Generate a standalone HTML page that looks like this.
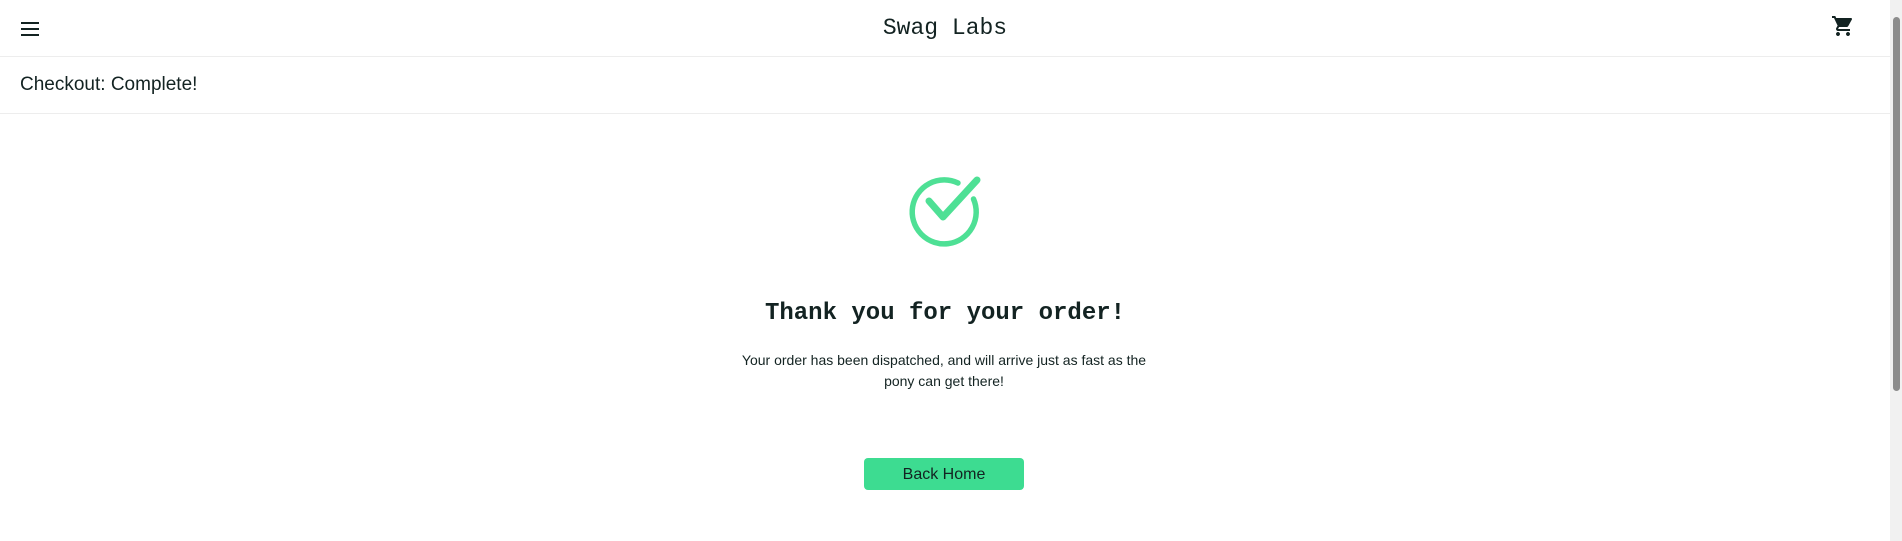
<!DOCTYPE html>
<html><head><meta charset="utf-8"><style>
html,body{margin:0;padding:0;}
body{width:1902px;height:541px;overflow:hidden;background:#fff;position:relative;font-family:"Liberation Sans",sans-serif;color:#132322;}
.hdr{position:absolute;left:0;top:0;width:1890px;height:56px;border-bottom:1px solid #ededed;}
.title{position:absolute;left:0;width:1890px;top:14px;text-align:center;font-family:"Liberation Mono",monospace;font-size:23px;line-height:28px;}
.sub{position:absolute;left:0;top:57px;width:1890px;height:56px;border-bottom:1px solid #ededed;}
.sub span{position:absolute;left:20px;top:16px;font-size:19px;line-height:24px;}
h2{position:absolute;left:0;width:1890px;top:299px;margin:0;text-align:center;font-family:"Liberation Mono",monospace;font-weight:bold;font-size:24px;line-height:30px;}
p{position:absolute;left:733px;width:422px;top:350px;margin:0;text-align:center;font-size:14px;line-height:21px;}
.btn{position:absolute;left:864px;top:458px;width:160px;height:32px;background:#3ddc91;border-radius:4px;text-align:center;font-size:16px;line-height:33px;}
.sb{position:absolute;left:1890px;top:0;width:12px;height:541px;background:#f1f1f1;}
.th{position:absolute;left:1893px;top:17px;width:7px;height:374px;background:#8c8c8c;border-radius:4px;}
</style></head><body>
<div class="hdr">
<svg style="position:absolute;left:20px;top:21px" width="20" height="16" viewBox="0 0 20 16"><rect x="1" y="1" width="18" height="2" fill="#132322"/><rect x="1" y="7" width="18" height="2" fill="#132322"/><rect x="1" y="13" width="18" height="2" fill="#132322"/></svg>
<div class="title">Swag Labs</div>
<svg style="position:absolute;left:1831px;top:14px" width="24" height="24" viewBox="0 0 24 24"><path fill="#132322" d="M7 18c-1.1 0-2 .9-2 2s.9 2 2 2 2-.9 2-2-.9-2-2-2zM1 2v2h2l3.6 7.59-1.35 2.45c-.16.28-.25.61-.25.96 0 1.1.9 2 2 2h12v-2H7.42c-.14 0-.25-.11-.25-.25l.03-.12.9-1.63h7.45c.75 0 1.41-.41 1.75-1.03l3.58-6.49A1 1 0 0 0 20 4H5.21l-.94-2H1zm16 16c-1.1 0-2 .9-2 2s.9 2 2 2 2-.9 2-2-.9-2-2-2z"/></svg>
</div>
<div class="sub"><span>Checkout: Complete!</span></div>
<svg style="position:absolute;left:0;top:0" width="1890" height="541"><path d="M973.5 199 A32 32 0 1 1 958 183" fill="none" stroke="#4ee095" stroke-width="5.5" stroke-linecap="round"/><path d="M929 201 L943 217 L977 180" fill="none" stroke="#4ee095" stroke-width="7" stroke-linecap="round" stroke-linejoin="round"/></svg>
<h2>Thank you for your order!</h2>
<p>Your order has been dispatched, and will arrive just as fast as the pony can get there!</p>
<div class="btn">Back Home</div>
<div class="sb"></div><div class="th"></div>
</body></html>
